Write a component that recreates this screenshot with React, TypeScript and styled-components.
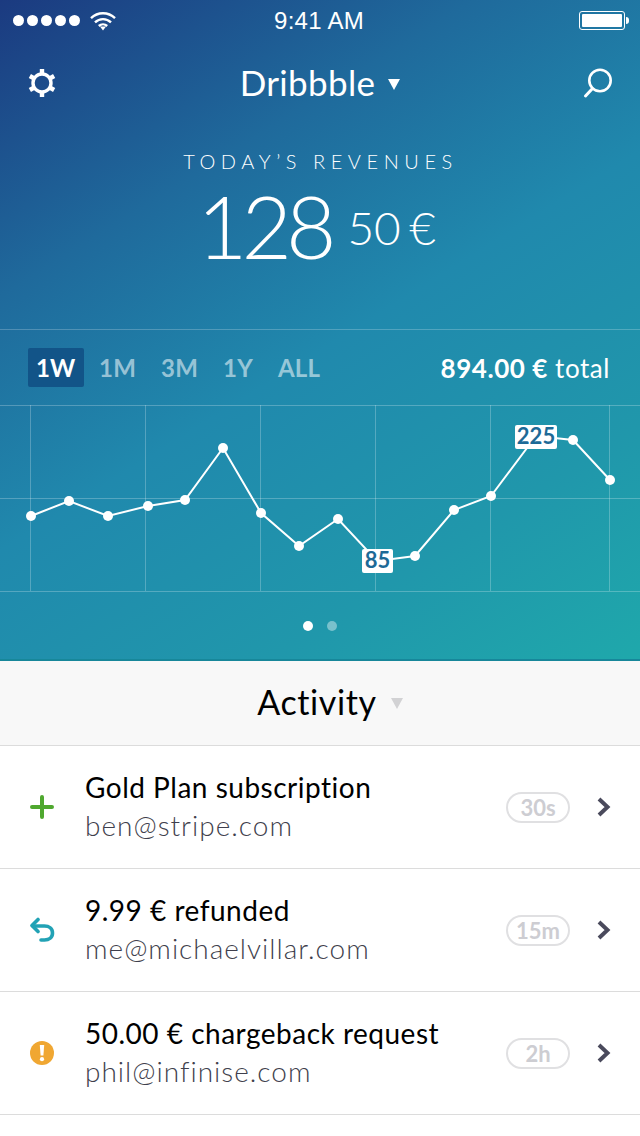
import { FC, ReactNode } from "react";
import styled, { createGlobalStyle } from "styled-components";

const font = `Lato, "Noto Sans", sans-serif`;

const GlobalStyle = createGlobalStyle`
  html, body {
    margin: 0;
    padding: 0;
    background: #fff;
  }
  body {
    font-family: ${font};
  }
`;

const Page = styled.div`
  width: 640px;
  height: 1136px;
  overflow: hidden;
  background: #fff;
`;

const Hero = styled.header`
  height: 661px;
  box-sizing: border-box;
  border-bottom: 2px solid #17879a;
  color: #fff;
  background: linear-gradient(148deg, #1b3a80 0%, #1f6a9c 28%, #2089ad 52%, #2097ab 78%, #1fa8ab 100%);
`;

const StatusBar = styled.div`
  height: 41px;
  padding: 0 15px 0 13px;
  display: grid;
  grid-template-columns: 1fr auto 1fr;
  align-items: center;
`;

const Signal = styled.div`
  display: flex;
  align-items: center;
  gap: 10px;
`;

const Dots = styled.div`
  display: flex;
  gap: 3px;
`;

const Dot = styled.span`
  width: 11px;
  height: 11px;
  border-radius: 50%;
  background: #fff;
`;

const Clock = styled.div`
  font-family: "Liberation Sans", Arial, sans-serif;
  font-size: 24px;
  letter-spacing: 0.25px;
  line-height: 40px;
`;

const Battery = styled.div`
  justify-self: end;
  width: 46px;
  height: 19px;
  box-sizing: border-box;
  padding: 2px;
  border: 1px solid #fff;
  border-radius: 3px;
  position: relative;

  &::before {
    content: "";
    display: block;
    height: 100%;
    background: #fff;
    border-radius: 1px;
  }

  &::after {
    content: "";
    position: absolute;
    right: -5px;
    top: 5px;
    width: 3px;
    height: 7px;
    background: #fff;
    border-radius: 0 3px 3px 0;
  }
`;

const NavBar = styled.nav`
  height: 84px;
  padding: 0 27px;
  display: flex;
  align-items: center;
  justify-content: space-between;
`;

const Title = styled.div`
  display: flex;
  align-items: center;
  gap: 13px;
  font-size: 35px;
  letter-spacing: 0.35px;
  line-height: 40px;
  margin-top: -2px;
`;

const Caret = styled.span<{ $muted?: boolean }>`
  width: 0;
  height: 0;
  border-left: 6px solid transparent;
  border-right: 6px solid transparent;
  border-top: 11px solid ${(p) => (p.$muted ? "#d2d2d4" : "#fff")};
  margin-top: 4px;
`;

const Revenue = styled.section`
  height: 205px;
  box-sizing: border-box;
  padding-top: 24px;
  display: flex;
  flex-direction: column;
  align-items: center;
  border-bottom: 1px solid rgba(255, 255, 255, 0.22);
`;

const Eyebrow = styled.div`
  font-size: 20px;
  font-weight: 300;
  letter-spacing: 5.55px;
  line-height: 24px;
  margin-left: 1px;
`;

const Amount = styled.div`
  display: flex;
  align-items: baseline;
  margin-top: 5px;
  margin-left: -7px;
`;

const Whole = styled.span`
  font-size: 87px;
  font-weight: 300;
  line-height: 96px;
  letter-spacing: -6px;
`;

const Cents = styled.span`
  font-size: 46px;
  font-weight: 300;
  word-spacing: -4px;
  margin-left: 17px;
  position: relative;
  top: -14px;
`;

const Range = styled.div`
  height: 75px;
  padding: 0 30px 0 28px;
  display: flex;
  align-items: center;
  justify-content: space-between;
`;

const Tabs = styled.div`
  display: flex;
  align-items: center;
`;

const Tab = styled.div<{ $active?: boolean }>`
  height: 39px;
  padding: 0 ${(p) => (p.$active ? "8px" : "12.5px")};
  margin-right: ${(p) => (p.$active ? "3px" : "0")};
  display: flex;
  align-items: center;
  border-radius: 2px;
  font-size: 24px;
  font-weight: 700;
  letter-spacing: 0.2px;
  color: ${(p) => (p.$active ? "#fff" : "rgba(255, 255, 255, 0.55)")};
  background: ${(p) => (p.$active ? "#125488" : "transparent")};
`;

const Total = styled.div`
  font-size: 26px;
  font-weight: 400;
  letter-spacing: 0.55px;

  b {
    font-weight: 700;
  }
`;

const ChartWrap = styled.div`
  height: 187px;
  line-height: 0;
`;

const Pager = styled.div`
  height: 67px;
  display: flex;
  align-items: center;
  justify-content: center;
  gap: 14px;
`;

const PagerDot = styled.span<{ $on?: boolean }>`
  width: 10px;
  height: 10px;
  border-radius: 50%;
  background: ${(p) => (p.$on ? "#fff" : "rgba(255, 255, 255, 0.4)")};
`;

const ActivityBar = styled.div`
  height: 85px;
  box-sizing: border-box;
  padding: 0 0 3px 20px;
  border-bottom: 1px solid #dcdcdc;
  background: #f8f8f8;
  display: flex;
  align-items: center;
  justify-content: center;
  gap: 14px;
  font-size: 34px;
  letter-spacing: 0.6px;
  color: #000;
`;

const Row = styled.div`
  height: 123px;
  box-sizing: border-box;
  border-bottom: 1px solid #dcdcdc;
  padding: 0 29px;
  display: flex;
  align-items: center;
`;

const RowIcon = styled.div`
  width: 26px;
  height: 26px;
  margin-right: 30px;
  flex: none;
  line-height: 0;
`;

const RowText = styled.div`
  flex: 1;
  min-width: 0;
  margin-top: -2px;
`;

const RowTitle = styled.div`
  font-size: 28px;
  line-height: 38px;
  color: #000;
  letter-spacing: 0.5px;
`;

const RowSub = styled.div`
  font-size: 28px;
  line-height: 39px;
  color: #3f3f4d;
  font-weight: 300;
  letter-spacing: 1px;
`;

const Age = styled.div`
  width: 64px;
  height: 31px;
  box-sizing: border-box;
  border: 2px solid #e0e0e2;
  border-radius: 16px;
  display: flex;
  align-items: center;
  justify-content: center;
  font-size: 22px;
  font-weight: 700;
  color: #cdcdd2;
  margin-right: 27px;
`;

const points: [number, number][] = [
  [31, 111], [69, 96], [108, 111], [148, 101], [185, 95], [223, 43], [261, 108], [299, 141],
  [338, 114], [377, 156], [415, 151], [454, 105], [491, 91], [536, 31], [573, 35], [610, 75],
];

const Chart: FC = () => (
  <svg width="640" height="187" viewBox="0 0 640 187">
    <g stroke="#fff" strokeOpacity="0.24" strokeWidth="1">
      <path d="M0 0.5H640M0 93.5H640M0 186.5H640" />
      <path d="M30.5 0V186M145.5 0V186M260.5 0V186M375.5 0V186M490.5 0V186M609.5 0V186" />
    </g>
    <polyline
      points={points.map((p) => p.join(",")).join(" ")}
      fill="none"
      stroke="#fff"
      strokeWidth="2"
    />
    {points.map(([x, y], i) =>
      i === 9 || i === 13 ? null : <circle key={i} cx={x} cy={y} r="5" fill="#fff" />
    )}
    <rect x="362" y="144" width="31" height="24" rx="2" fill="#fff" />
    <text x="377.5" y="163" textAnchor="middle" fontFamily={font} fontSize="22" fontWeight="700" fill="#1d6a97">
      85
    </text>
    <rect x="515" y="20" width="42" height="24" rx="2" fill="#fff" />
    <text x="536" y="39" textAnchor="middle" fontFamily={font} fontSize="22" fontWeight="700" fill="#1d6a97">
      225
    </text>
  </svg>
);

const Gear: FC = () => (
  <svg width="30" height="30" viewBox="0 0 30 30">
    <circle cx="15" cy="15" r="9" fill="none" stroke="#fff" strokeWidth="3.4" />
    <g stroke="#fff" strokeWidth="4.4">
      <path d="M15 1V6M15 24V29" />
      <path d="M15 1V6M15 24V29" transform="rotate(60 15 15)" />
      <path d="M15 1V6M15 24V29" transform="rotate(120 15 15)" />
    </g>
  </svg>
);

const Search: FC = () => (
  <svg width="30" height="32" viewBox="0 0 30 32" fill="none" stroke="#fff">
    <circle cx="17" cy="13.5" r="10.7" strokeWidth="2.6" />
    <path d="M9.5 21.5L2.5 29" strokeWidth="3" strokeLinecap="round" />
  </svg>
);

const Wifi: FC = () => (
  <svg width="26" height="20" viewBox="0 0 26 20" fill="none" stroke="#fff" strokeWidth="2.4">
    <path d="M1 7.2C7.8 0.6 18.2 0.6 25 7.2" />
    <path d="M5 11.4C9.6 7 16.4 7 21 11.4" />
    <path d="M8.8 15C11.2 12.8 14.8 12.8 17.2 15" />
    <path d="M10 15.5L13 19.5L16 15.5Z" fill="#fff" stroke="none" />
  </svg>
);

const Plus: FC = () => (
  <svg width="26" height="26" viewBox="0 0 26 26" stroke="#4fa82f" strokeWidth="4" strokeLinecap="round">
    <path d="M13 3V23M3 13H23" />
  </svg>
);

const Refund: FC = () => (
  <svg width="26" height="26" viewBox="0 0 26 26" fill="none" stroke="#22a2b5" strokeWidth="3.6">
    <path d="M9 2.5L3 8.5L9 14.5" strokeLinecap="round" strokeLinejoin="round" />
    <path d="M4 9H15.5C20 9 23.5 11.5 23.5 16C23.5 20.5 20 23 15.5 23H12" strokeLinecap="round" />
  </svg>
);

const Alert: FC = () => (
  <svg width="26" height="26" viewBox="0 0 26 26">
    <circle cx="13" cy="13" r="12" fill="#f0a732" />
    <path d="M10.8 5H15.2L14.4 15.5H11.6Z" fill="#fff" />
    <circle cx="13" cy="19.2" r="2.1" fill="#fff" />
  </svg>
);

const Chevron: FC = () => (
  <svg width="14" height="20" viewBox="0 0 14 20" fill="none" stroke="#4a4a5c" strokeWidth="4">
    <path d="M2 2L10.5 10L2 18" />
  </svg>
);

const items: { icon: ReactNode; title: string; sub: string; age: string }[] = [
  { icon: <Plus />, title: "Gold Plan subscription", sub: "ben@stripe.com", age: "30s" },
  { icon: <Refund />, title: "9.99 € refunded", sub: "me@michaelvillar.com", age: "15m" },
  { icon: <Alert />, title: "50.00 € chargeback request", sub: "phil@infinise.com", age: "2h" },
];

const App: FC = () => (
  <Page>
    <GlobalStyle />
    <Hero>
      <StatusBar>
        <Signal>
          <Dots>
            {[0, 1, 2, 3, 4].map((i) => (
              <Dot key={i} />
            ))}
          </Dots>
          <Wifi />
        </Signal>
        <Clock>9:41 AM</Clock>
        <Battery />
      </StatusBar>
      <NavBar>
        <Gear />
        <Title>
          Dribbble
          <Caret />
        </Title>
        <Search />
      </NavBar>
      <Revenue>
        <Eyebrow>TODAY’S REVENUES</Eyebrow>
        <Amount>
          <Whole>128</Whole>
          <Cents>50 €</Cents>
        </Amount>
      </Revenue>
      <Range>
        <Tabs>
          <Tab $active>1W</Tab>
          <Tab>1M</Tab>
          <Tab>3M</Tab>
          <Tab>1Y</Tab>
          <Tab>ALL</Tab>
        </Tabs>
        <Total>
          <b>894.00 €</b> total
        </Total>
      </Range>
      <ChartWrap>
        <Chart />
      </ChartWrap>
      <Pager>
        <PagerDot $on />
        <PagerDot />
      </Pager>
    </Hero>
    <ActivityBar>
      Activity
      <Caret $muted />
    </ActivityBar>
    {items.map((item) => (
      <Row key={item.sub}>
        <RowIcon>{item.icon}</RowIcon>
        <RowText>
          <RowTitle>{item.title}</RowTitle>
          <RowSub>{item.sub}</RowSub>
        </RowText>
        <Age>{item.age}</Age>
        <Chevron />
      </Row>
    ))}
  </Page>
);

export default App;
